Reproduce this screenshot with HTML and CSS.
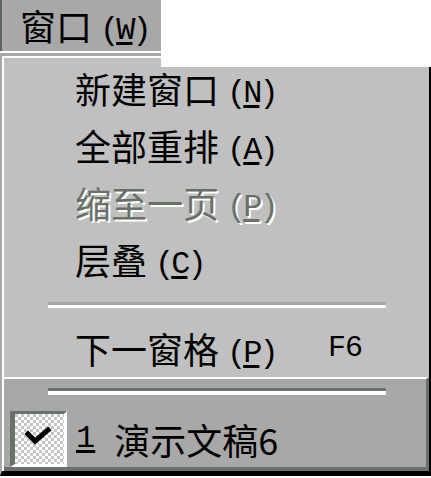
FILE: index.html
```html
<!DOCTYPE html>
<html lang="zh-CN">
<head>
<meta charset="utf-8">
<title>窗口菜单</title>
<link rel="stylesheet" href="styles.css">
</head>
<body>
<div class="title"><span class="cjk">窗口</span><span class="mn">(<u>W</u>)</span></div>
<div class="menu">
  <div class="inner">
    <div class="item"><span class="text"><span class="cjk">新建窗口</span><span class="mn">(<u>N</u>)</span></span></div>
    <div class="item"><span class="text"><span class="cjk">全部重排</span><span class="mn">(<u>A</u>)</span></span></div>
    <div class="item disabled"><span class="text"><span class="cjk">缩至一页</span><span class="mn">(<u>P</u>)</span></span></div>
    <div class="item"><span class="text"><span class="cjk">层叠</span><span class="mn">(<u>C</u>)</span></span></div>
    <div class="sep"></div>
    <div class="item"><span class="text"><span class="cjk">下一窗格</span><span class="mn">(<u>P</u>)</span></span><span class="key">F6</span></div>
    <div class="selected">
      <div class="sep sep-dark"></div>
      <div class="check-row">
        <span class="box">
          <svg width="49" height="50" viewBox="0 0 49 50" aria-hidden="true">
            <polyline points="13,20 20,27 33,16" fill="none" stroke="#000" stroke-width="5" stroke-linecap="square" stroke-linejoin="miter"/>
          </svg>
        </span>
        <span class="num"><u>1</u></span>
        <span class="doc">演示文稿6</span>
      </div>
    </div>
  </div>
</div>
</body>
</html>
```

FILE: styles.css
```css
html, body {
  margin: 0;
  padding: 0;
  background: #ffffff;
}

body {
  width: 431px;
  height: 478px;
  overflow: hidden;
  font-family: "Noto Sans CJK SC", "Noto Sans", sans-serif;
  font-size: 36px;
  color: #000;
}

.title {
  width: 141px;
  height: 51px;
  line-height: 51px;
  background: #a8a8a8;
  border-left: 2px solid #5d675d;
  padding-left: 18px;
  white-space: nowrap;
}

.mn {
  font-family: "Liberation Mono", monospace;
  font-size: 32px;
  letter-spacing: -3px;
  margin-left: 8px;
  vertical-align: 2px;
}

.mn u,
.num u {
  text-decoration-thickness: 3px;
  text-underline-offset: 3px;
}

.menu {
  position: relative;
  margin-top: 2px;
  background: #c0c0c0;
  border-top: 3px solid #a8a8a8;
  border-left: 2px solid #a8a8a8;
  border-right: 2px solid #000;
  border-bottom: 5px solid #000;
}

.menu::before {
  content: "";
  position: absolute;
  top: -3px;
  left: 159px;
  right: -2px;
  height: 14px;
  background: #fff;
}

.inner {
  border-top: 2px solid #fff;
  border-left: 2px solid #fff;
  padding-top: 2px;
}

.item {
  display: flex;
  height: 57px;
  line-height: 57px;
  padding-left: 71px;
  white-space: nowrap;
}

.item .text {
  width: 253px;
}

.key {
  font-family: "Liberation Mono", monospace;
  font-size: 30px;
  letter-spacing: -1px;
}

.disabled {
  color: #687068;
  text-shadow: 2px 2px 0 #fff;
}

.sep {
  height: 32px;
  box-sizing: border-box;
  padding-top: 14px;
}

.sep::before {
  content: "";
  display: block;
  margin-left: 44px;
  width: 338px;
  border-top: 3px solid #a8a8a8;
  border-bottom: 3px solid #fff;
}

.selected {
  background: #a8a8a8;
  border-top: 2px solid #fff;
  border-right: 3px solid #69726a;
  border-bottom: 4px solid #69726a;
}

.sep-dark {
  padding-top: 9px;
}

.sep-dark::before {
  border-top-color: #69726a;
  border-bottom-width: 4px;
}

.check-row {
  display: flex;
  align-items: center;
  height: 56px;
  line-height: 56px;
  white-space: nowrap;
}

.box {
  display: flex;
  box-sizing: border-box;
  width: 57px;
  height: 56px;
  margin-left: 6px;
  border-left: 5px solid #69726a;
  border-top: 3px solid #69726a;
  border-right: 3px solid #fff;
  border-bottom: 3px solid #fff;
  background-color: #fff;
  background-image: repeating-conic-gradient(#ffffff 0 25%, #c6c6c6 0 50%);
  background-size: 6px 6px;
}

.num {
  font-family: "Liberation Mono", monospace;
  font-size: 32px;
  margin-left: 9px;
}

.doc {
  margin-left: 19px;
}
```
